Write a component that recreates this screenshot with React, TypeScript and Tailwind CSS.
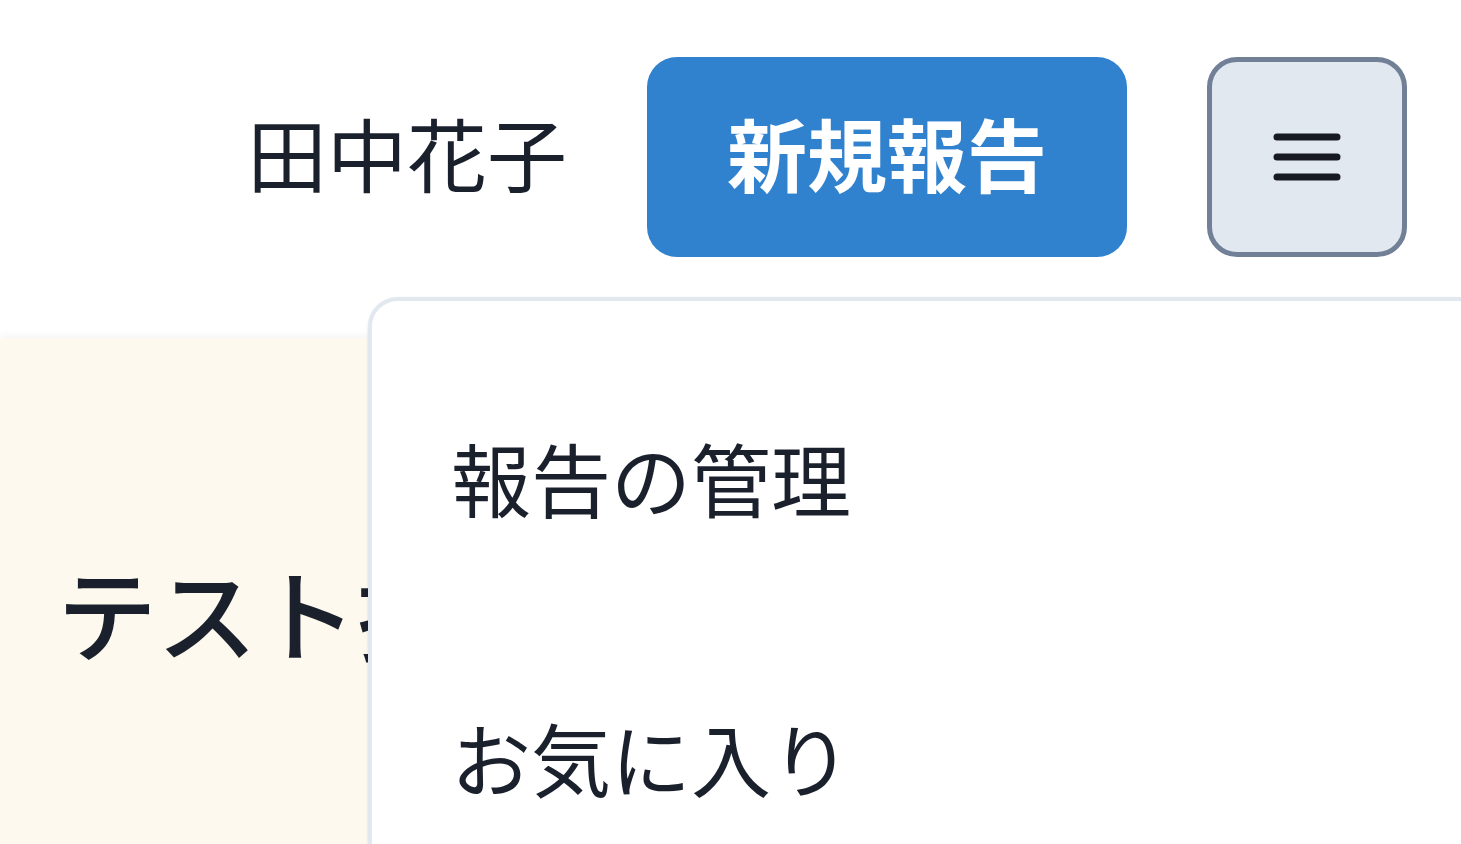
import React from 'react';

const font = { fontFamily: '"Noto Sans CJK JP", "Noto Sans", sans-serif' };

const MenuIcon: React.FC = () => (
  <svg width="68" height="48" viewBox="0 0 68 48" fill="none" stroke="#171923" strokeWidth={7} strokeLinecap="round">
    <line x1="4" y1="4" x2="64" y2="4" />
    <line x1="4" y1="24" x2="64" y2="24" />
    <line x1="4" y1="44" x2="64" y2="44" />
  </svg>
);

const App: React.FC = () => {
  const menuItems = ['報告の管理', 'お気に入り'];

  return (
    <div className="relative w-full h-[844px] overflow-hidden bg-white text-[#1a202c]" style={font}>
      {/* Header */}
      <header className="h-[314px] flex items-center justify-end gap-[80px] pr-[54px]">
        <span className="text-[80px] leading-none -mt-[12px]">田中花子</span>
        <button className="h-[200px] px-[80px] pb-[12px] rounded-[30px] bg-[#3182ce] text-white text-[80px] font-bold leading-none">
          新規報告
        </button>
        <button className="w-[200px] h-[200px] rounded-[30px] border-[5px] border-[#718096] bg-[#e2e8f0] flex items-center justify-center">
          <MenuIcon />
        </button>
      </header>

      {/* Card */}
      <div className="mt-[24px] h-[520px] bg-[#fdf9ee] shadow-[0_-2px_8px_rgba(0,0,0,0.05)] px-[57px] pt-[213px]">
        <h2 className="text-[100px] font-medium leading-[1.2] whitespace-nowrap">テスト投稿</h2>
      </div>

      {/* Dropdown menu */}
      <div className="absolute left-[368px] top-[297px] w-[1120px] h-[700px] bg-white border-[4px] border-[#e2e8f0] rounded-[30px] shadow-sm py-[35px]">
        {menuItems.map((item) => (
          <div key={item} className="px-[79px] py-[80px] text-[80px] leading-[1.5]">
            {item}
          </div>
        ))}
      </div>
    </div>
  );
};

export default App;
